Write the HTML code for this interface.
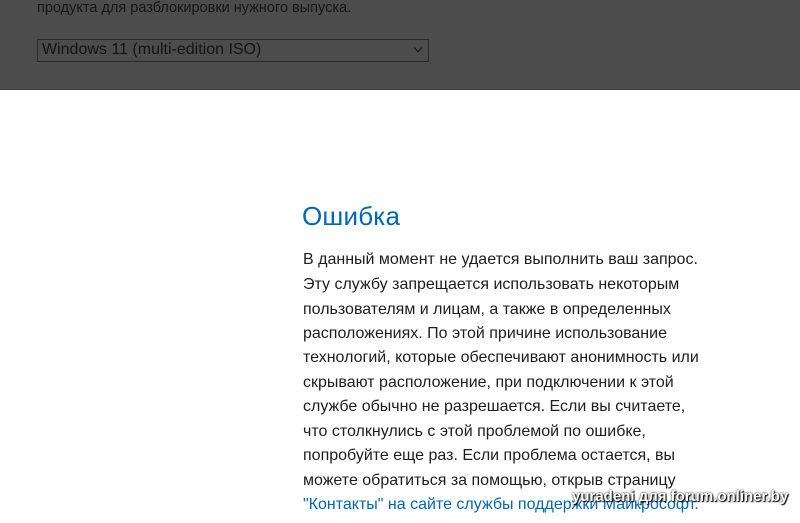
<!DOCTYPE html>
<html><head><meta charset="utf-8"><style>
html,body{margin:0;padding:0;width:800px;height:523px;overflow:hidden;background:#fff;font-family:"Liberation Sans","DejaVu Sans",sans-serif;}
.top{position:absolute;left:0;top:0;width:800px;height:89px;background:#4c4c4c;border-bottom:1px solid #3e3e3e;}
.t1{position:absolute;left:37px;top:0px;font-size:14.5px;color:#161616;}
.sel{position:absolute;left:37px;top:39px;width:392px;height:23px;border:1px solid #2a2a2a;box-sizing:border-box;}
.sel span{position:absolute;left:4px;top:1px;font-size:16px;color:#141414;}
.sel i{position:absolute;right:7px;top:5px;width:5px;height:5px;border-right:1.5px solid #111;border-bottom:1.5px solid #111;transform:rotate(45deg);}
h1{position:absolute;left:302px;top:201px;margin:0;font-size:26px;font-weight:normal;color:#0067b8;letter-spacing:0.2px;}
.l{position:absolute;left:303px;font-size:16px;color:#1e1e1e;white-space:nowrap;}
.a{color:#0067b8;}
.wm{position:absolute;left:572px;top:488px;font-size:15px;font-weight:bold;color:#fff;text-shadow:0 0 2px #000,1px 1px 1px #000;}
</style></head><body>
<div class="top">
<div class="t1">продукта для разблокировки нужного выпуска.</div>
<div class="sel"><span>Windows 11 (multi-edition ISO)</span><i></i></div>
</div>
<h1>Ошибка</h1>
<div class="l" style="top:251px">В данный момент не удается выполнить ваш запрос.</div>
<div class="l" style="top:276px">Эту службу запрещается использовать некоторым</div>
<div class="l" style="top:301px">пользователям и лицам, а также в определенных</div>
<div class="l" style="top:325px">расположениях. По этой причине использование</div>
<div class="l" style="top:349px">технологий, которые обеспечивают анонимность или</div>
<div class="l" style="top:374px">скрывают расположение, при подключении к этой</div>
<div class="l" style="top:398px">службе обычно не разрешается. Если вы считаете,</div>
<div class="l" style="top:423px">что столкнулись с этой проблемой по ошибке,</div>
<div class="l" style="top:447px">попробуйте еще раз. Если проблема остается, вы</div>
<div class="l" style="top:472px">можете обратиться за помощью, открыв страницу</div>
<div class="l a" style="top:496px">"Контакты" на сайте службы поддержки Майкрософт.</div>
<div class="wm">yuradeni для forum.onliner.by</div>
</body></html>
